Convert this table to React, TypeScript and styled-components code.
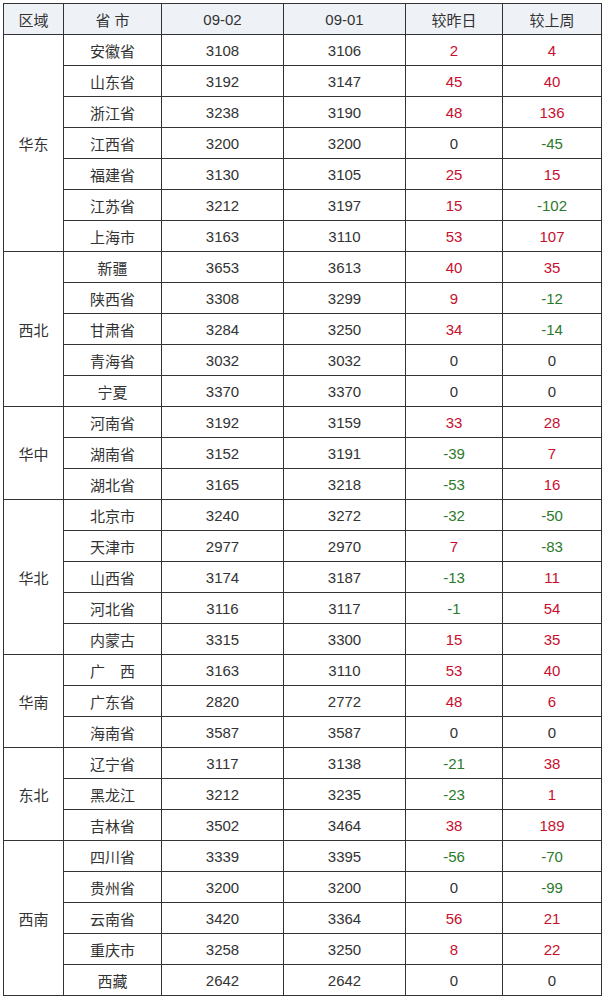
import React from 'react'
import styled, { createGlobalStyle } from 'styled-components'

type Tone = 'up' | 'down' | 'flat'

interface Row {
  name: string;
  cur: number;
  prev: number;
  day: number;
  week: number;
}

interface Region {
  region: string;
  rows: Row[];
}

const r = (name: string, cur: number, prev: number, day: number, week: number): Row => ({ name, cur, prev, day, week })

const data: Region[] = [
  {
    region: '华东',
    rows: [
      r('安徽省', 3108, 3106, 2, 4),
      r('山东省', 3192, 3147, 45, 40),
      r('浙江省', 3238, 3190, 48, 136),
      r('江西省', 3200, 3200, 0, -45),
      r('福建省', 3130, 3105, 25, 15),
      r('江苏省', 3212, 3197, 15, -102),
      r('上海市', 3163, 3110, 53, 107),
    ],
  },
  {
    region: '西北',
    rows: [
      r('新疆', 3653, 3613, 40, 35),
      r('陕西省', 3308, 3299, 9, -12),
      r('甘肃省', 3284, 3250, 34, -14),
      r('青海省', 3032, 3032, 0, 0),
      r('宁夏', 3370, 3370, 0, 0),
    ],
  },
  {
    region: '华中',
    rows: [
      r('河南省', 3192, 3159, 33, 28),
      r('湖南省', 3152, 3191, -39, 7),
      r('湖北省', 3165, 3218, -53, 16),
    ],
  },
  {
    region: '华北',
    rows: [
      r('北京市', 3240, 3272, -32, -50),
      r('天津市', 2977, 2970, 7, -83),
      r('山西省', 3174, 3187, -13, 11),
      r('河北省', 3116, 3117, -1, 54),
      r('内蒙古', 3315, 3300, 15, 35),
    ],
  },
  {
    region: '华南',
    rows: [
      r('广　西', 3163, 3110, 53, 40),
      r('广东省', 2820, 2772, 48, 6),
      r('海南省', 3587, 3587, 0, 0),
    ],
  },
  {
    region: '东北',
    rows: [
      r('辽宁省', 3117, 3138, -21, 38),
      r('黑龙江', 3212, 3235, -23, 1),
      r('吉林省', 3502, 3464, 38, 189),
    ],
  },
  {
    region: '西南',
    rows: [
      r('四川省', 3339, 3395, -56, -70),
      r('贵州省', 3200, 3200, 0, -99),
      r('云南省', 3420, 3364, 56, 21),
      r('重庆市', 3258, 3250, 8, 22),
      r('西藏', 2642, 2642, 0, 0),
    ],
  },
]

const toneOf = (n: number): Tone => (n > 0 ? 'up' : n < 0 ? 'down' : 'flat')

const Global = createGlobalStyle`
  body {
    margin: 0;
    padding: 3px 0 0 3px;
    background: #fff;
    font-family: "Liberation Sans", "Noto Sans CJK SC", sans-serif;
  }
`

const Table = styled.table`
  border-collapse: collapse;
  table-layout: fixed;
  font-size: 15px;
  color: #333;
`

const HeadCell = styled.th<{ w: number }>`
  width: ${p => p.w}px;
  height: 30px;
  padding: 0;
  border: 1px solid #333;
  background: #eef2f7;
  font-weight: normal;
  text-align: center;
`

const Cell = styled.td<{ tone?: Tone }>`
  height: 30px;
  padding: 0;
  border: 1px solid #333;
  text-align: center;
  color: ${p => (p.tone === 'up' ? '#c8102e' : p.tone === 'down' ? '#2b7a2b' : '#333')};
`

const fmt = (n: number) => (n < 0 ? `-${Math.abs(n)}` : `${n}`)

export default function App() {
  return (
    <>
      <Global />
      <Table>
        <thead>
          <tr>
            <HeadCell w={59}>区域</HeadCell>
            <HeadCell w={97}>省 市</HeadCell>
            <HeadCell w={121}>09-02</HeadCell>
            <HeadCell w={121}>09-01</HeadCell>
            <HeadCell w={96}>较昨日</HeadCell>
            <HeadCell w={98}>较上周</HeadCell>
          </tr>
        </thead>
        <tbody>
          {data.map(g =>
            g.rows.map((row, i) => (
              <tr key={g.region + row.name}>
                {i === 0 && <Cell rowSpan={g.rows.length}>{g.region}</Cell>}
                <Cell>{row.name}</Cell>
                <Cell>{row.cur}</Cell>
                <Cell>{row.prev}</Cell>
                <Cell tone={toneOf(row.day)}>{fmt(row.day)}</Cell>
                <Cell tone={toneOf(row.week)}>{fmt(row.week)}</Cell>
              </tr>
            ))
          )}
        </tbody>
      </Table>
    </>
  )
}
